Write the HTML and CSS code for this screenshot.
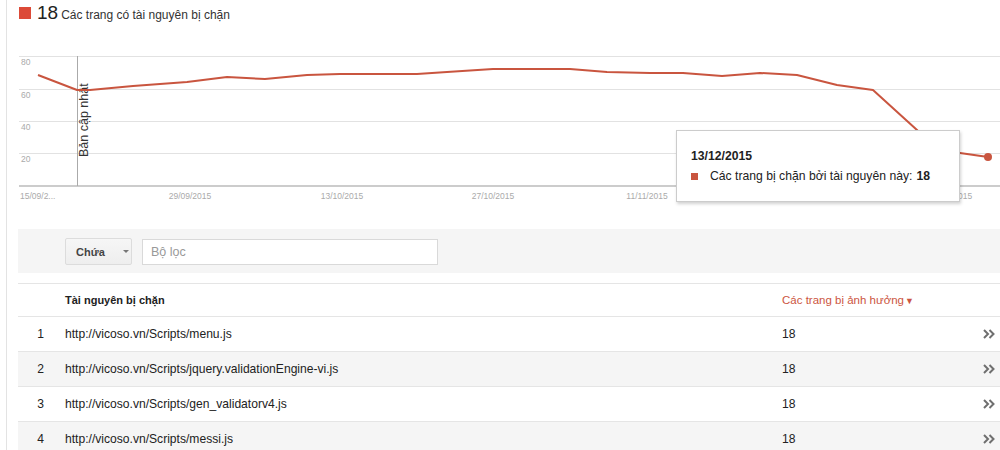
FILE: index.html
```html
<!DOCTYPE html>
<html>
<head>
<meta charset="utf-8">
<link rel="stylesheet" href="styles.css">
</head>
<body>
<div class="page">
  <div class="legend">
    <span class="swatch"></span>
    <span class="big">18</span>
    <span class="legend-text">Các trang có tài nguyên bị chặn</span>
  </div>
  <div class="chart">
    <svg class="chart-svg" width="982" height="196" viewBox="0 0 982 196">
      <g class="grid">
        <line x1="1" y1="30.5" x2="982" y2="30.5"/>
        <line x1="1" y1="63.5" x2="982" y2="63.5"/>
        <line x1="1" y1="95.5" x2="982" y2="95.5"/>
        <line x1="1" y1="127.5" x2="982" y2="127.5"/>
      </g>
      <line class="base" x1="1" y1="160" x2="982" y2="160"/>
      <g class="ylab">
        <text x="3" y="39">80</text>
        <text x="3" y="72">60</text>
        <text x="3" y="104">40</text>
        <text x="3" y="136">20</text>
      </g>
      <g class="xlab">
        <text x="2" y="173">15/09/2...</text>
        <text x="172" y="173" text-anchor="middle">29/09/2015</text>
        <text x="324" y="173" text-anchor="middle">13/10/2015</text>
        <text x="475" y="173" text-anchor="middle">27/10/2015</text>
        <text x="629" y="173" text-anchor="middle">11/11/2015</text>
        <text x="782" y="173" text-anchor="middle">25/11/2015</text>
        <text x="933" y="173" text-anchor="middle">09/12/2015</text>
      </g>
      <line class="marker" x1="59.5" y1="30" x2="59.5" y2="160"/>
      <text class="marker-text" transform="translate(70,131) rotate(-90)">Bản cập nhật</text>
      <polyline class="series" points="20,49 59,64 72,64 115,60 169,56 209,51 247,53 289,49 322,48 399,48 429,46 475,43 552,43 589,46 632,47 665,47 704,50 742,47 779,49 819,59 855,64 899,104 917,126 942,127 970,131"/>
      <circle class="dot" cx="970" cy="131" r="4"/>
    </svg>
    <div class="tooltip">
      <div class="tt-date">13/12/2015</div>
      <div class="tt-item"><span class="tt-swatch"></span>Các trang bị chặn bởi tài nguyên này: <b>18</b></div>
    </div>
  </div>
  <div class="filter">
    <div class="dropdown">Chứa<span class="caret"></span></div>
    <div class="input">Bộ lọc</div>
  </div>
  <div class="table">
    <div class="row head">
      <div></div>
      <div class="hcell">Tài nguyên bị chặn</div>
      <div class="hcell sorted">Các trang bị ảnh hưởng<span class="sort-arrow">▼</span></div>
      <div></div>
    </div>
    <div class="row">
      <div class="num">1</div>
      <div>http://vicoso.vn/Scripts/menu.js</div>
      <div>18</div>
      <div class="go"><svg class="chev" width="12" height="10" viewBox="0 0 12 10"><path d="M1 1 L5 5 L1 9 M6.5 1 L10.5 5 L6.5 9"/></svg></div>
    </div>
    <div class="row alt">
      <div class="num">2</div>
      <div>http://vicoso.vn/Scripts/jquery.validationEngine-vi.js</div>
      <div>18</div>
      <div class="go"><svg class="chev" width="12" height="10" viewBox="0 0 12 10"><path d="M1 1 L5 5 L1 9 M6.5 1 L10.5 5 L6.5 9"/></svg></div>
    </div>
    <div class="row">
      <div class="num">3</div>
      <div>http://vicoso.vn/Scripts/gen_validatorv4.js</div>
      <div>18</div>
      <div class="go"><svg class="chev" width="12" height="10" viewBox="0 0 12 10"><path d="M1 1 L5 5 L1 9 M6.5 1 L10.5 5 L6.5 9"/></svg></div>
    </div>
    <div class="row alt">
      <div class="num">4</div>
      <div>http://vicoso.vn/Scripts/messi.js</div>
      <div>18</div>
      <div class="go"><svg class="chev" width="12" height="10" viewBox="0 0 12 10"><path d="M1 1 L5 5 L1 9 M6.5 1 L10.5 5 L6.5 9"/></svg></div>
    </div>
  </div>
</div>
</body>
</html>
```

FILE: styles.css
```css
html, body {
  margin: 0;
  padding: 0;
  background: #fff;
  overflow: hidden;
}
body {
  font-family: "Liberation Sans", Arial, sans-serif;
  color: #222;
  width: 1000px;
  height: 450px;
}
.page {
  margin-left: 6px;
  border-left: 1px solid #e3e3e3;
  padding-left: 11px;
  height: 450px;
  box-sizing: border-box;
}
.legend {
  height: 26px;
  display: flex;
  align-items: center;
  box-sizing: border-box;
}
.swatch {
  width: 12px;
  height: 12px;
  background: #dc4a38;
  margin-left: 1px;
  margin-right: 6px;
}
.big {
  font-size: 19px;
  color: #222;
  margin-right: 3px;
  line-height: 22px;
}
.legend-text {
  font-size: 12px;
  color: #333;
  padding-top: 3px;
}
.chart {
  position: relative;
  height: 196px;
}
.chart-svg {
  display: block;
}
.grid line {
  stroke: #e2e2e2;
  stroke-width: 1;
}
.base {
  stroke: #999;
  stroke-width: 1;
}
.ylab text, .xlab text {
  font-family: "Liberation Sans", Arial, sans-serif;
  font-size: 8.5px;
  fill: #aaa;
}
.marker {
  stroke: #aaa;
  stroke-width: 1;
}
.marker-text {
  font-family: "Liberation Sans", Arial, sans-serif;
  font-size: 12.5px;
  fill: #333;
}
.series {
  fill: none;
  stroke: #c9553f;
  stroke-width: 2;
  stroke-linejoin: round;
}
.dot {
  fill: #c9553f;
}
.tooltip {
  position: absolute;
  left: 658px;
  top: 104px;
  width: 284px;
  height: 72px;
  box-sizing: border-box;
  background: #fff;
  border: 1px solid #ccc;
  box-shadow: 1px 2px 3px rgba(0,0,0,0.18);
  padding: 18px 0 0 14px;
  font-size: 12.2px;
  color: #222;
}
.tt-date {
  font-weight: bold;
  margin-bottom: 6px;
}
.tt-item {
  display: flex;
  align-items: center;
}
.tt-item b {
  margin-left: 4px;
}
.tt-swatch {
  width: 7px;
  height: 7px;
  background: #c9553f;
  margin-right: 12px;
}
.filter {
  margin-top: 7px;
  height: 44px;
  background: #f5f5f5;
  display: flex;
  align-items: center;
  padding-left: 47px;
  padding-top: 1px;
  box-sizing: border-box;
}
.dropdown {
  width: 67px;
  height: 27px;
  box-sizing: border-box;
  border: 1px solid #dcdcdc;
  border-radius: 2px;
  background: linear-gradient(#f6f6f6, #eeeeee);
  font-size: 11px;
  font-weight: bold;
  color: #444;
  display: flex;
  align-items: center;
  padding-left: 10px;
}
.caret {
  width: 0;
  height: 0;
  border-left: 3px solid transparent;
  border-right: 3px solid transparent;
  border-top: 3px solid #777;
  margin-left: 18px;
}
.input {
  margin-left: 10px;
  width: 296px;
  height: 26px;
  box-sizing: border-box;
  border: 1px solid #d9d9d9;
  background: #fff;
  font-size: 12.5px;
  color: #999;
  display: flex;
  align-items: center;
  padding-left: 8px;
}
.table {
  margin-top: 10px;
  border-top: 1px solid #e5e5e5;
}
.row {
  display: grid;
  grid-template-columns: 47px 717px 1fr 30px;
  height: 35px;
  align-items: center;
  border-bottom: 1px solid #e5e5e5;
  font-size: 12.1px;
  color: #222;
  box-sizing: border-box;
}
.row.head {
  height: 33px;
}
.row.alt {
  background: #f5f5f5;
}
.hcell {
  font-size: 11px;
  font-weight: bold;
  color: #222;
}
.hcell.sorted {
  color: #cc5541;
  font-weight: normal;
  font-size: 11.5px;
}
.sort-arrow {
  font-size: 9px;
  margin-left: 1px;
}
.num {
  text-align: center;
  padding-right: 2px;
}
.go {
  padding-left: 13px;
  display: flex;
  align-items: center;
}
.chev {
  display: block;
}
.chev path {
  fill: none;
  stroke: #6f6f6f;
  stroke-width: 2;
}
```
